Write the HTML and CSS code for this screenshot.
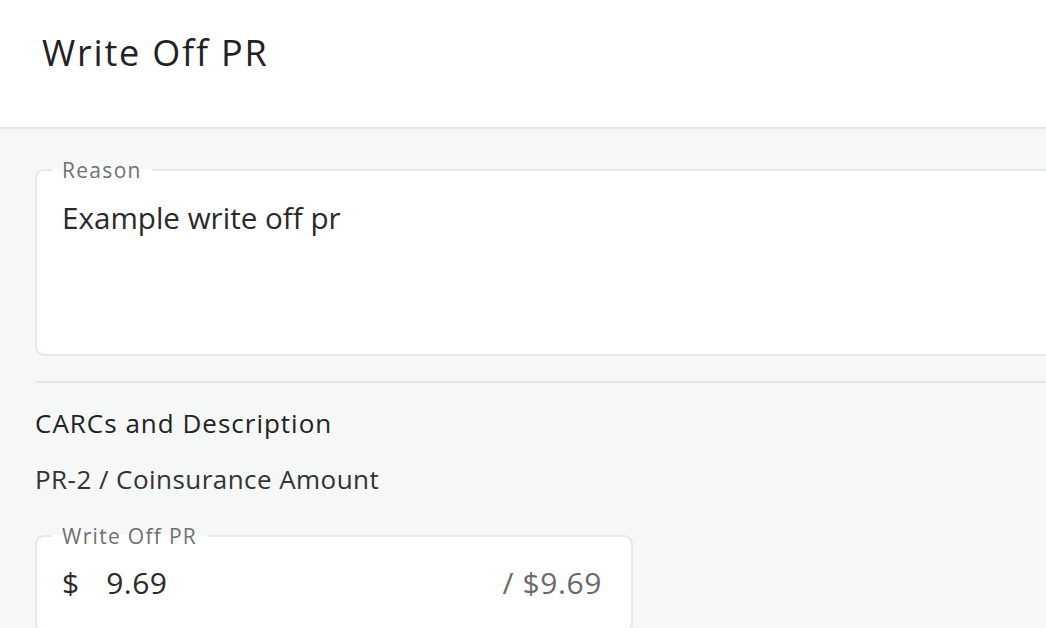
FILE: index.html
```html
<!DOCTYPE html>
<html lang="en">
<head>
<meta charset="utf-8">
<title>Write Off PR</title>
<link rel="stylesheet" href="styles.css">
</head>
<body>
<div class="dialog">
  <header class="dialog-header">
    <h1 class="dialog-title">Write Off PR</h1>
  </header>
  <main class="dialog-body">
    <fieldset class="field field-reason">
      <legend class="field-label">Reason</legend>
      <div class="field-input field-input-multi">Example write off pr</div>
    </fieldset>
    <hr class="divider">
    <h2 class="section-title">CARCs and Description</h2>
    <p class="carc-line">PR-2 / Coinsurance Amount</p>
    <fieldset class="field field-amount">
      <legend class="field-label">Write Off PR</legend>
      <div class="field-input field-input-amount">
        <span class="currency">$</span>
        <span class="amount">9.69</span>
        <span class="amount-max">/ $9.69</span>
      </div>
    </fieldset>
  </main>
</div>
</body>
</html>
```
FILE: styles.css
```css
html, body {
  margin: 0;
  padding: 0;
  overflow: hidden;
}
body {
  width: 1046px;
  height: 628px;
  background: #f6f7f7;
  font-family: "Open Sans", "Liberation Sans", sans-serif;
  color: #242424;
}
.dialog {
  display: flex;
  flex-direction: column;
}
.dialog-header {
  box-sizing: border-box;
  height: 129px;
  padding: 31px 0 0 42px;
  background: #ffffff;
  border-bottom: 2px solid #e5e6e6;
}
.dialog-title {
  margin: 0;
  font-size: 36px;
  line-height: 44px;
  font-weight: 400;
  letter-spacing: 1.8px;
  color: #222222;
}
.dialog-body {
  display: flex;
  flex-direction: column;
  align-items: flex-start;
  padding: 0 0 0 35px;
}
.field {
  margin: 0;
  padding: 0;
  min-width: 0;
  background: #ffffff;
  border: 2px solid #e6e7e7;
  border-radius: 9px;
  box-sizing: border-box;
}
.field-label {
  margin-left: 15px;
  padding: 0 10px;
  font-size: 21px;
  line-height: 20px;
  letter-spacing: 1.3px;
  color: #707070;
}
.field-reason {
  align-self: stretch;
  margin-top: 31px;
  border-right: 0;
  border-radius: 9px 0 0 9px;
}
.field-input {
  box-sizing: border-box;
  padding: 0 26px;
  font-size: 30px;
  line-height: 36px;
  color: #2a2a2a;
}
.field-input-multi {
  height: 174px;
  padding-top: 20px;
  padding-left: 25px;
  font-size: 29.6px;
}
.divider {
  align-self: stretch;
  margin: 25px 0 0 0;
  height: 2px;
  border: 0;
  background: #e5e6e6;
}
.section-title {
  margin: 24px 0 0 0;
  font-size: 26px;
  line-height: 32px;
  font-weight: 500;
  letter-spacing: 1px;
  color: #222222;
}
.carc-line {
  margin: 24px 0 0 0;
  font-size: 26px;
  line-height: 32px;
  letter-spacing: 0.45px;
  color: #333333;
}
.field-amount {
  width: 598px;
  margin-top: 31px;
}
.field-input-amount {
  display: flex;
  align-items: baseline;
  height: 84px;
  padding-top: 19px;
  padding-right: 29px;
  padding-left: 25px;
}
.currency {
  margin-right: 27px;
}
.amount {
  letter-spacing: 0.5px;
}
.amount-max {
  margin-left: auto;
  letter-spacing: 0.6px;
  color: #6a6a6a;
}
```
